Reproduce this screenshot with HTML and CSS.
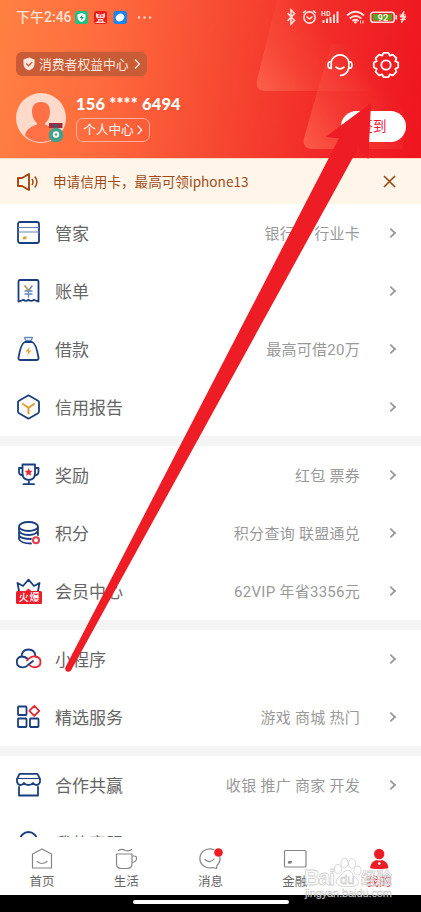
FILE: index.html
```html
<!DOCTYPE html>
<html lang="zh-CN">
<head>
<meta charset="utf-8">
<meta name="viewport" content="width=device-width, initial-scale=1">
<title>我的</title>
<link rel="stylesheet" href="styles.css">
</head>
<body>
<div class="phone">
  <header class="hero">
    <svg class="hero-art" width="421" height="158" viewBox="0 0 421 158">
      <defs>
        <linearGradient id="g1" gradientUnits="userSpaceOnUse" x1="255" y1="91" x2="325" y2="30"><stop offset="0" stop-color="#ff7157" stop-opacity=".7"/><stop offset=".5" stop-color="#ff6a52" stop-opacity=".25"/><stop offset="1" stop-color="#ff7157" stop-opacity="0"/></linearGradient>
        <linearGradient id="g2" gradientUnits="userSpaceOnUse" x1="302" y1="149" x2="385" y2="85"><stop offset="0" stop-color="#ff7157" stop-opacity=".7"/><stop offset=".5" stop-color="#ff6a52" stop-opacity=".25"/><stop offset="1" stop-color="#ff7157" stop-opacity="0"/></linearGradient>
      </defs>
      <path d="M277 0 257 80Q255 91 266 91H400L421 0Z" fill="url(#g1)"/>
      <path d="M331 44 304 138Q302 149 313 149H402L421 44Z" fill="url(#g2)"/>
    </svg>
    <div class="status">
      <span class="clock">下午2:46</span>
      <svg class="apps" width="82" height="16" viewBox="0 0 82 16">
        <rect x="1" y="2" width="13" height="13" rx="2.5" fill="#1fbf83"/><path d="M7.500 4 11.500 5.500V8Q11.500 11.500 7.500 13 3.500 11.500 3.500 8V5.500Z" fill="#fff"/><path d="M8.500 5.500 5.500 9H7.500L7 11.500 10 8H8Z" fill="#159a6c"/>
        <rect x="20" y="2" width="13" height="13" rx="2.500" fill="#e91d1d"/><path d="M22 4 25 5.500H28L31 4V8L29 10V12L32 14H21L24 12V10L22 8Z" fill="#ffd5cb"/><path d="M24 7H26M27 7H29M24 9.500H29M25 12H28" stroke="#d62020"/>
        <rect x="39.500" y="2" width="13.500" height="13" rx="3" fill="#1685ef"/><ellipse cx="46" cy="8.500" rx="4.500" ry="3.800" transform="rotate(-35 46 8.500)" fill="#fff"/>
        <g fill="#ffd9cd"><circle cx="65" cy="8.500" r="1.200"/><circle cx="70.500" cy="8.500" r="1.200"/><circle cx="76" cy="8.500" r="1.200"/></g>
      </svg>
      <svg class="signals" width="122" height="18" viewBox="0 0 122 18" fill="none" stroke="#ffe1dc" stroke-width="1.600">
        <path d="m1.500 5 7 7.500L5 16V2l3.500 3.500-7 7.500"/>
        <circle cx="23.500" cy="9.500" r="5.600"/><path d="m20.500 8.500 3 2.500 3-2.500M17 5l3-2.500M30 5l-3-2.500"/>
        <text class="hd" x="35" y="7.500">HD</text>
        <path d="M37.500 15v-3M41 15v-4.500M44.500 15V9M48 15V6.500M51.500 15V3.500" stroke-width="2"/>
        <path d="M61 7.500Q69.500 0 78 7.500M63.700 10.500Q69.500 5.500 75.300 10.500M66.500 13Q69.500 10.500 72.500 13" stroke-width="1.800"/><circle cx="69.500" cy="14.200" r="1.300" fill="#ffe1dc" stroke="none"/><path d="M74.500 12.500v3M77 12.500v3" stroke-width="1"/>
        <rect x="84.700" y="4.200" width="23.600" height="10" rx="2.800"/><rect x="87" y="6" width="19" height="6.500" fill="#58a522" stroke="none"/><path d="M110.300 7v4.500"/>
        <text class="battery" x="91.500" y="12.700">92</text>
      </svg>
      <svg class="bolt" width="8" height="14" viewBox="0 0 8 14"><path d="M5 1 1 7H3.500L2.500 13 7 6.500H4.500ZM.5 5H7M1 9.500H7" fill="#ffe1dc" stroke="#ffe1dc" stroke-width=".8"/></svg>
    </div>
    <div class="tools">
      <div class="rights">
        <svg width="12" height="14" viewBox="0 0 12 14"><path d="M6 .5 11.500 2.500V7Q11.500 11.500 6 13.500.5 11.500.5 7V2.500Z" fill="#ffe6dc"/><path d="m3.200 6.500 2.300 2.300 3.700-3.600" fill="none" stroke="#d1613d" stroke-width="1.300"/></svg>
        <span>消费者权益中心</span>
        <svg width="7" height="12" viewBox="0 0 7 12"><path d="m1 1.500 4.500 4.500L1 10.500" fill="none" stroke="#ffe6dc" stroke-width="1.300"/></svg>
      </div>
      <svg class="headset" width="26" height="24" viewBox="0 0 26 24" fill="none" stroke="#fff" stroke-width="1.700" stroke-linecap="round" stroke-linejoin="round"><path d="M4.200 9A9 9 0 0 1 21.800 9V15Q20 22 13.500 22.500M4.200 8.500Q1 8.500 1 12T4.200 15.500ZM21.800 8.500Q25 8.500 25 12T21.800 15.500M9 14.200Q13 17.500 17 14.200"/></svg>
      <svg class="gear" width="28" height="28" viewBox="0 0 28 28" fill="none" stroke="#fff" stroke-width="1.800" stroke-linejoin="round"><path d="M11.500 1.800h5l1.300 2.900 3.100-1.100 3.500 3.500-1.100 3.100 2.900 1.300v5l-2.900 1.300 1.100 3.100-3.500 3.500-3.100-1.100-1.300 2.900h-5l-1.300-2.900-3.100 1.100-3.500-3.500 1.100-3.100-2.900-1.300v-5l2.900-1.300-1.100-3.100 3.500-3.500 3.100 1.100Z"/><circle cx="14" cy="14" r="4.700"/></svg>
    </div>
    <div class="profile">
      <svg class="avatar" width="50" height="52" viewBox="0 0 50 52">
        <circle cx="25" cy="25" r="25" fill="#ffd9ca"/>
        <path d="M25 9C18.500 9 16 13 16 18.500 16 24 18.500 28 21 30V31.500C16 33 10 36 9 42.500 14 47 19 49 25 49S36 47 41 42.500C40 36 34 33 29 31.500V30C32 28 34 24 34 18.500 34 13 31.500 9 25 9Z" fill="#ff7047"/>
        <path d="M33 30h13.500v5H33Z" fill="#a3293d"/><path d="M37 31h5l-1 5h-3Z" fill="#4d5663"/><circle cx="40" cy="42" r="7.300" fill="#43a08a"/><circle cx="40" cy="41.500" r="3.200" fill="#fff"/><circle cx="40" cy="41.500" r="1.200" fill="#43a08a"/>
      </svg>
      <div class="identity">
        <div class="number">156 **** 6494</div>
        <div class="center"><span>个人中心</span><svg width="6" height="10" viewBox="0 0 6 10"><path d="m.7.7 4 4.300-4 4.300" fill="none" stroke="#fff" stroke-width="1.200"/></svg></div>
      </div>
      <div class="signin">签到</div>
    </div>
  </header>
  <div class="notice">
    <svg width="24" height="20" viewBox="0 0 24 20" fill="none" stroke="#a5460f" stroke-width="1.900" stroke-linejoin="round"><path d="M3 6H7L14 2V18L7 14H3Z"/><path d="M17 7Q19 10 17 13M19.800 4.500Q24 10 19.800 15.500" stroke-width="1.500"/></svg>
    <span>申请信用卡，最高可领iphone13</span>
    <svg class="close" width="13" height="13" viewBox="0 0 13 13"><path d="m1 1 11 11m0-11L1 12" stroke="#a04a17" stroke-width="1.700"/></svg>
  </div>
  <main class="list">
    <section>
      <div class="row"><svg class="icon navy" viewBox="0 0 28 28"><rect x="4" y="3" width="21" height="21" rx="2"/><path d="M4 8.500h21M4 13h21" stroke="#6681b3" stroke-width="1.100"/><path d="m9.500 17.500-1 2.800h3.500l1-2.800Z" fill="#df9d32" stroke="none"/></svg><span class="label">管家</span><span class="value">银行卡 行业卡</span><i class="chev"></i></div>
      <div class="row"><svg class="icon navy" viewBox="0 0 28 28"><path d="M4.500 24.500V4.500Q4.500 3 6 3H23Q24.500 3 24.500 4.500V24.500Q22 24 20 22.800 17 25 14.500 22.800 12 25 9.500 22.800 7.500 24 4.500 24.500Z"/><path d="m11 9 3.500 4.500L18 9M14.500 13.500v6.500M11 14h7M11 17h7" stroke="#6389bd" stroke-width="1.400"/><path d="m11 9 3.300 4" stroke="#df9d32" stroke-width="1.400"/></svg><span class="label">账单</span><i class="chev"></i></div>
      <div class="row"><svg class="icon navy" viewBox="0 0 28 28"><path d="M10.500 2.500h8l-1.300 3h-5.400Z" stroke="#6c8dbb" stroke-width="1.300"/><path d="M11 7H18Q22 8 24.500 22.500 24.800 25 22.500 25H6.500Q4.200 25 4.500 22.500 7 8 11 7Z"/><path d="m16 11.500-4.500 5h2.800L13 20.500l4.500-5h-2.800Z" fill="#e2a236" stroke="none"/></svg><span class="label">借款</span><span class="value">最高可借20万</span><i class="chev"></i></div>
      <div class="row"><svg class="icon navy" viewBox="0 0 28 28"><path d="M14.500 2.300 24 7.800Q25 8.500 25 9.500V18.500Q25 19.500 24 20.200L14.500 25.700 5 20.200Q4 19.500 4 18.500V9.500Q4 8.500 5 7.800Z"/><path d="m9 11 5.500 3.800L20 11m-5.500 3.800v5.700" stroke="#df9d32" stroke-width="2"/></svg><span class="label">信用报告</span><i class="chev"></i></div>
    </section>
    <section>
      <div class="row"><svg class="icon navy" viewBox="0 0 28 28"><path d="M8.500 3.500h12.500v9q0 6-6.200 6.500-6.300-.5-6.300-6.500ZM8.500 7H5v4q0 3 4 3.500M21 7h3.500v4q0 3-4 3.500M14.800 19v4M9.500 23.200h10.500"/><path d="m14.700 7.800 1 2.200 2.500.2-1.900 1.600.6 2.500-2.200-1.300-2.200 1.300.6-2.500-1.900-1.600 2.500-.2Z" fill="#e52734" stroke="#e52734" stroke-width=".5"/></svg><span class="label">奖励</span><span class="value">红包 票券</span><i class="chev"></i></div>
      <div class="row"><svg class="icon navy" viewBox="0 0 28 28"><ellipse cx="14.500" cy="7.500" rx="9.500" ry="4.500"/><path d="M5 8.500v3Q6 15.500 14.500 16 23 15.500 24 11.500v-3M5 13v3.500Q7 20 17 20M5 17.500V20Q7 24.500 17 24.500M24 13v3"/><circle cx="22" cy="21.300" r="3" stroke="#e43a49" stroke-width="2"/></svg><span class="label">积分</span><span class="value">积分查询 联盟通兑</span><i class="chev"></i></div>
      <div class="row"><svg class="icon navy" viewBox="0 0 28 28"><path d="M5 14 3.500 6 9 9 14.500 2.700 20 9 25.500 6 24 14"/><path d="m11 14.500 3.500-3 3.500 3Z" fill="#e52734" stroke="none"/><rect x="2" y="14" width="26" height="13" rx="1.500" fill="#ed1c2b" stroke="none"/><text class="hot" x="4.800" y="24">火爆</text></svg><span class="label">会员中心</span><span class="value">62VIP 年省3356元</span><i class="chev"></i></div>
    </section>
    <section>
      <div class="row"><svg class="icon navy" viewBox="0 0 28 28"><path d="M7.500 11.500Q8 4.500 14.500 4.500T21.500 11.500M14 14.500Q11.500 11.500 8 11.500 2.800 12 2.800 17T8.500 22.300Q12 22.500 14 20L19 16"/><path d="M13 15.500Q17 11 21 11.500 26.500 12 26.500 17T20.500 22.300Q17.500 22.300 16 20.500" stroke="#ec2634"/></svg><span class="label">小程序</span><i class="chev"></i></div>
      <div class="row"><svg class="icon navy" viewBox="0 0 28 28"><rect x="4" y="3.500" width="8.500" height="8.500" rx=".7"/><rect x="4" y="15.500" width="8.500" height="8.500" rx=".7"/><rect x="16" y="15.500" width="8.500" height="8.500" rx=".7"/><path d="M20.300 2.800 25.300 7.800 20.300 12.800 15.300 7.800Z" stroke="#e52734"/></svg><span class="label">精选服务</span><span class="value">游戏 商城 热门</span><i class="chev"></i></div>
    </section>
    <section>
      <div class="row"><svg class="icon navy" viewBox="0 0 28 28"><path d="M5.500 2.800H23.500L26 8V11Q25 14 22.500 14 20.500 14 19 12 17.500 14 14.500 14T10 12Q8.500 14 6.500 14 4 14 3 11V8ZM5 16V24.500H24V16"/><path d="M4.500 7.500h20" stroke-width="1"/></svg><span class="label">合作共赢</span><span class="value">收银 推广 商家 开发</span><i class="chev"></i></div>
      <div class="row peek"><svg class="icon navy" viewBox="0 0 28 28"><circle cx="14.500" cy="11.500" r="8.500"/></svg><span class="label">我的客服</span></div>
    </section>
  </main>
  <nav class="tabs">
    <div class="tab"><svg viewBox="0 0 28 26"><path d="M4.500 22V8L14 3 23.500 8V22Z"/><path d="M9 15.500Q14 19.500 19 15.500"/></svg><span>首页</span></div>
    <div class="tab"><svg viewBox="0 0 28 26"><path d="M4.500 8h15.500v9.500q0 5-5 5H9.500q-5 0-5-5ZM20 10h2Q25 10 24.500 13T20 16.500M6.500 4.500Q9.500 2.500 13 4.200T19.500 3.500"/></svg><span>生活</span></div>
    <div class="tab"><svg viewBox="0 0 28 26"><path d="M18 3.800A10 9.500 0 1 0 17 21.500L20.500 22.500 21 19.500Q24.500 16 24 11M9 13.500Q14 18 18 13"/><circle cx="22.500" cy="6.500" r="4.300" fill="#ed1c25" stroke="none"/></svg><span>消息</span></div>
    <div class="tab"><svg viewBox="0 0 28 26"><rect x="3.500" y="4.500" width="21.500" height="16.500" rx="1"/><path d="m7.500 15-.8 2.500h3.600l.8-2.500Z" fill="#777" stroke="none"/></svg><span>金融</span></div>
    <div class="tab active"><svg viewBox="0 0 28 26" class="solid"><circle cx="14.200" cy="8" r="5.200"/><path d="M5 22Q6 15 11.500 14Q14 15 17 14Q22.500 15 23.500 22Q21 23 14 23T5 22Z"/><circle cx="14.300" cy="17.500" r="1.300" fill="#fff"/></svg><span>我的</span></div>
  </nav>
  <div class="homebar"><i></i></div>
  <svg class="overlay" width="421" height="912" viewBox="0 0 421 912">
    <g class="mark">
      <text class="brand" x="304" y="885" textLength="31">Bai</text>
      <ellipse cx="338" cy="869" rx="3.500" ry="4.500"/><ellipse cx="344.500" cy="863" rx="3.500" ry="4.800"/><ellipse cx="352" cy="863.500" rx="3.500" ry="4.800"/><ellipse cx="357.500" cy="870.500" rx="3.500" ry="4.500"/>
      <path d="M336 882Q336 878 341 875.500 343 870.500 347.500 870.500T353 875.500Q359 879 358.500 883 357.500 887 348 886.500 337 887 336 882Z"/>
      <text class="du" x="340" y="884">du</text>
      <text class="brand-cn" x="361" y="884">经验</text>
      <text class="url" x="305" y="897" textLength="87">jingyan.baidu.com</text>
    </g>
    <path d="M371 103 325.500 137 339 138.300 65.300 667.500Q64.500 671 67.500 671.800 69.800 672 71 670.500L358.200 148 368.300 159Z" fill="#ee1c24"/>
  </svg>
</div>
</body>
</html>
```
FILE: styles.css
```css
* { box-sizing: border-box; }
body { margin: 0; font-family: "Noto Sans CJK SC", sans-serif; background: #fff; }
.phone { position: relative; width: 421px; height: 912px; overflow: hidden; display: flex; flex-direction: column; }
.hero { position: relative; flex: none; height: 158px; padding: 0 15px 0 16px; background: linear-gradient(97deg, #ff8043 0%, #fe6b3d 25%, #f74b32 51%, #f22c29 75%, #ee151f 100%); color: #fff; }
.hero-art { position: absolute; left: 0; top: 0; }
.status, .tools, .profile { position: relative; display: flex; align-items: center; }
.status { height: 34px; margin-right: -3px; color: #ffe1d5; }
.clock { width: 58px; font-family: Roboto, "Noto Sans CJK SC", sans-serif; font-size: 14px; font-weight: 500; white-space: nowrap; line-height: 34px; }
.signals { margin-left: auto; margin-right: -9px; }
.bolt { margin-right: 2px; }
.signals text { stroke: none; fill: #ffe5e0; font-weight: 700; }
.hd { font-size: 6.500px; }
.battery { font-family: Roboto, sans-serif; font-size: 9.500px; }
.tools { height: 60px; }
.rights { width: 131px; height: 24px; border-radius: 6px; background: #c95b36; color: #ffe8df; display: flex; align-items: center; padding-left: 7px; gap: 4px; font-size: 12.800px; white-space: nowrap; }
.rights span { width: 91px; padding-bottom: 2px; }
.headset { margin-left: auto; margin-right: 19px; margin-top: 2px; }
.gear { margin-right: 6px; margin-top: 2px; }
.profile { height: 52px; margin-top: -1px; }
.avatar { flex: none; }
.identity { margin-left: 10px; margin-top: -3px; }
.number { font-family: Lato, sans-serif; font-size: 16.400px; font-weight: 900; line-height: 20px; margin-bottom: 4px; letter-spacing: .2px; white-space: nowrap; }
.center { width: 74px; height: 24px; border: 1px solid #ffae9a; border-radius: 7px; display: flex; align-items: center; justify-content: center; gap: 3px; font-size: 12.600px; }
.center span { padding-bottom: 2px; }
.signin { width: 65px; height: 31px; margin: 15px 0 0 auto; border-radius: 16px; background: #fff; color: #e71b3b; font-size: 13.500px; text-align: center; line-height: 28px; padding-right: 1px; }
.notice { flex: none; height: 46px; display: flex; align-items: center; padding: 0 25px 0 15px; background: #fff6e9; color: #a04a17; border-top: 1px solid #fbd9c2; }
.notice span { margin-left: 14px; padding-bottom: 2px; font-size: 13.600px; white-space: nowrap; }
.close { margin-left: auto; }
.list { flex: none; height: 633px; overflow: hidden; background: #f4f4f4; display: flex; flex-direction: column; gap: 10px; }
section { flex: none; background: #fff; }
.row { height: 58px; display: flex; align-items: center; padding: 0 24px 0 14px; }
.icon { flex: none; width: 28px; height: 28px; fill: none; stroke-width: 1.800; stroke-linejoin: round; stroke-linecap: round; overflow: visible; }
.navy { stroke: #1b3f7e; }
.hot { fill: #fff; stroke: none; font-size: 10px; letter-spacing: .6px; font-weight: 500; }
.label { margin-left: 13px; padding-bottom: 2px; font-size: 17px; color: #666; white-space: nowrap; }
.peek .label { padding: 0 0 1px; }
.value { margin-left: auto; padding-bottom: 2px; font-family: Roboto, "Noto Sans CJK SC", sans-serif; font-size: 15px; color: #999; white-space: nowrap; letter-spacing: .27px; }
.chev { width: 8px; height: 8px; margin: 0 2px 0 27px; border: solid #999; border-width: 2px 2px 0 0; transform: rotate(45deg) scale(.9); flex: none; }
.label + .chev { margin-left: auto; }
.tabs { flex: none; height: 58px; background: #fff; display: grid; grid-template-columns: repeat(5, 1fr); }
.tab { display: flex; flex-direction: column; align-items: center; padding-top: 9px; color: #666; font-size: 12.500px; line-height: 18px; }
.tab svg { width: 28px; height: 26px; fill: none; stroke: #858585; stroke-width: 1.200; stroke-linecap: round; stroke-linejoin: round; }
.tab svg.solid { fill: #ed1c25; stroke: none; }
.active { color: #ed3039; }
.homebar { flex: none; height: 17px; background: #000; display: flex; justify-content: center; align-items: flex-start; padding-top: 5px; }
.homebar i { width: 156px; height: 4px; border-radius: 2px; background: #fff; }
.overlay { position: absolute; left: 0; top: 0; }
.mark { fill: #fff; fill-opacity: .7; stroke: #bbb; stroke-opacity: .7; stroke-width: .8; font-family: "Liberation Sans", "Noto Sans CJK SC", sans-serif; }
.brand { font-size: 22px; font-weight: 700; }
.brand-cn { font-size: 15.500px; font-weight: 700; }
.du { font-size: 13px; }
.url { font-size: 11px; fill: #ddd; fill-opacity: .95; stroke: #aaa; stroke-width: .3; }
```
